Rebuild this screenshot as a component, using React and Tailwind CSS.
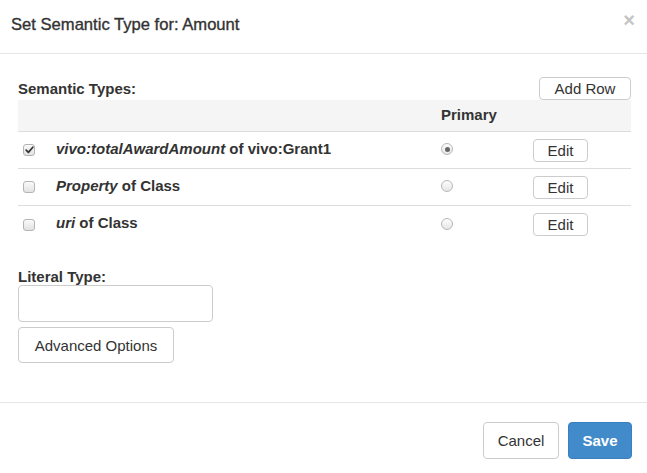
import React from "react";

function Check({ checked }) {
  return (
    <div className="w-[12px] h-[12px] rounded-[3px] border border-[#b4b4b4] bg-gradient-to-b from-[#fafafa] to-[#e2e2e2] flex items-center justify-center">
      {checked && (
        <svg width="9" height="8" viewBox="0 0 9 8">
          <path d="M1.2 4.2 L3.4 6.4 L7.8 1.2" fill="none" stroke="#333" strokeWidth="1.7" strokeLinecap="round" strokeLinejoin="round" />
        </svg>
      )}
    </div>
  );
}

function Radio({ checked }) {
  return (
    <div className="w-[12px] h-[12px] rounded-full border border-[#b8b8b8] bg-gradient-to-b from-[#fdfdfd] to-[#e6e6e6] flex items-center justify-center">
      {checked && <div className="w-[5px] h-[5px] rounded-full bg-[#666]" />}
    </div>
  );
}

function Row({ checked, em, rest, last }) {
  return (
    <div className={`grid grid-cols-[30px_385px_92px_1fr] h-[37px] items-center ${last ? "" : "border-b border-[#dddddd]"}`}>
      <div className="pl-[5px] flex items-center">
        <Check checked={checked} />
      </div>
      <div className="pl-[8px] font-bold text-[15px] text-[#333] -mt-[2px]">
        <i>{em}</i> {rest}
      </div>
      <div className="pl-[8px] flex items-center -mt-[2px]">
        <Radio checked={checked} />
      </div>
      <div className="pl-[8px] flex items-center">
        <button className="w-[55px] h-[23px] border border-[#cccccc] rounded-[4px] bg-white text-[15px] text-[#333] leading-none">Edit</button>
      </div>
    </div>
  );
}

export default function App() {
  return (
    <div className="w-[647px] h-[473px] bg-white text-[#333] font-['Liberation_Sans',Arial,sans-serif]">
      <div className="h-[54px] border-b border-[#e5e5e5] flex items-center justify-between pl-[11px] pr-[12px]">
        <div className="text-[16.6px] leading-none text-[#333] -mt-[3px] [-webkit-text-stroke:0.35px_#333]">Set Semantic Type for: Amount</div>
        <div className="text-[20px] font-bold text-[#c4c4c4] leading-none -mt-[13px]">×</div>
      </div>
      <div className="pr-[16px] pl-[18px] pt-[23px]">
        <div className="flex items-center justify-between">
          <div className="font-bold text-[15px] leading-none">Semantic Types:</div>
          <button className="w-[92px] h-[23px] border border-[#cccccc] rounded-[4px] bg-white text-[15px] leading-none">Add Row</button>
        </div>
        <div className="grid grid-cols-[30px_385px_92px_1fr] h-[32px] items-center bg-[#f5f5f5] border-b border-[#dddddd]">
          <div />
          <div />
          <div className="pl-[8px] font-bold text-[15px]">Primary</div>
          <div />
        </div>
        <Row checked em="vivo:totalAwardAmount" rest="of vivo:Grant1" />
        <Row em="Property" rest="of Class" />
        <Row em="uri" rest="of Class" last />
        <div className="mt-[26px] font-bold text-[15px] leading-none">Literal Type:</div>
        <div className="mt-[1px] w-[195px] h-[37px] border border-[#cccccc] rounded-[4px]" />
        <button className="mt-[5px] w-[156px] h-[36px] border border-[#cccccc] rounded-[4px] bg-white text-[15px] leading-none">Advanced Options</button>
      </div>
      <div className="mt-[39px] border-t border-[#e5e5e5] flex justify-end gap-[9px] pr-[15px] pt-[19px]">
        <button className="w-[76px] h-[37px] border border-[#cccccc] rounded-[4px] bg-white text-[15px] leading-none">Cancel</button>
        <button className="w-[64px] h-[37px] border border-[#3a7fc0] rounded-[4px] bg-[#428bca] text-white font-bold text-[15px] leading-none">Save</button>
      </div>
    </div>
  );
}
